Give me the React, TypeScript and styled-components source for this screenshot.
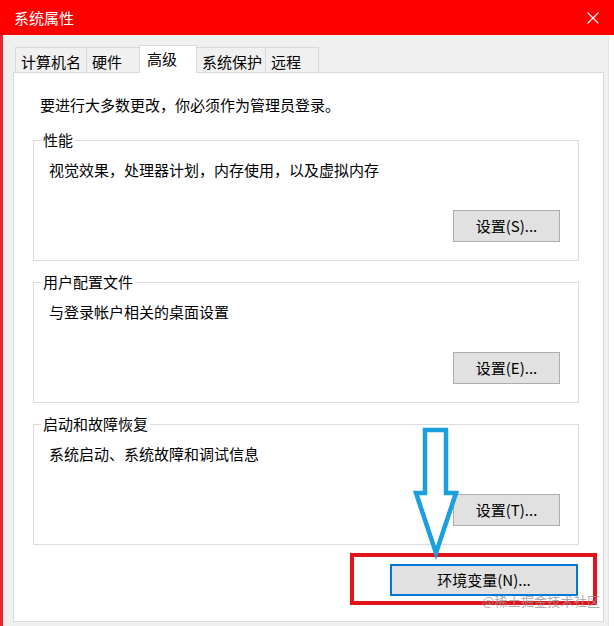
import React from "react";
import styled, { createGlobalStyle } from "styled-components";

const Global = createGlobalStyle`
  html, body { margin: 0; padding: 0; background: #ffffff; }
  body { font-family: "Noto Sans CJK SC", "Noto Sans", "Liberation Sans", sans-serif; }
  * { box-sizing: border-box; }
`;

const Window = styled.div`
  position: relative;
  width: 614px;
  height: 626px;
  display: flex;
  flex-direction: column;
  background: #ffffff;
  overflow: hidden;
  font-size: 15px;
  line-height: 20px;
  color: #000;
`;

const TitleBar = styled.div`
  height: 35px;
  flex: none;
  background: #ff0000;
  color: #ffffff;
  display: flex;
  align-items: center;
  justify-content: space-between;
  padding: 0 15px 0 14px;
  font-size: 15px;
`;

const Body = styled.div`
  flex: 1;
  width: 609px;
  background: #f0f0f0;
  border-left: 3px solid #e8262c;
  border-right: 1px solid #e4e4e4;
  padding: 10px 4px 4px 10px;
  display: flex;
  flex-direction: column;
`;

const TabStrip = styled.div`
  display: flex;
  align-items: flex-end;
  padding-left: 2px;
`;

const Tab = styled.div<{ $w: number; $active?: boolean }>`
  position: relative;
  z-index: ${(p) => (p.$active ? 2 : 1)};
  width: ${(p) => p.$w}px;
  height: ${(p) => (p.$active ? 28 : 25)}px;
  margin-right: -1px;
  margin-bottom: ${(p) => (p.$active ? -1 : 0)}px;
  padding: ${(p) => (p.$active ? 3 : 4)}px 0 0 ${(p) => (p.$active ? 7 : 5)}px;
  border: 1px solid #d9d9d9;
  border-bottom: none;
  background: ${(p) => (p.$active ? "#ffffff" : "#f0f0f0")};
  white-space: nowrap;
`;

const Panel = styled.div`
  flex: 1;
  background: #ffffff;
  border: 1px solid #d9d9d9;
  padding: 22px 24px 0 19px;
  display: flex;
  flex-direction: column;
`;

const Intro = styled.div`
  margin-left: 7px;
  margin-bottom: 15px;
`;

const Group = styled.fieldset`
  margin: 0 0 11px 0;
  padding: 10px 18px 18px 0;
  border: 1px solid #dcdcdc;
  min-width: 0;
  display: flex;
  flex-direction: column;
`;

const Legend = styled.legend`
  margin-left: 7px;
  padding: 0 2px;
  line-height: 20px;
`;

const GroupText = styled.div`
  height: 20px;
  margin-left: 15px;
`;

const Button = styled.button<{ $w: number; $focus?: boolean }>`
  align-self: flex-end;
  width: ${(p) => p.$w}px;
  height: 32px;
  margin-top: ${(p) => (p.$focus ? 0 : 30)}px;
  background: #e1e1e1;
  border: ${(p) => (p.$focus ? "2px solid #0078d7" : "1px solid #adadad")};
  font-family: inherit;
  font-size: 15px;
  line-height: 20px;
  color: #000;
  padding: 0;
`;

const EnvRow = styled.div`
  display: flex;
  justify-content: flex-end;
  margin-top: 8px;
  padding-right: 1px;
`;

const Highlight = styled.div`
  position: absolute;
  left: 350px;
  top: 553px;
  width: 247px;
  height: 52px;
  border: 4px solid #e3141c;
  pointer-events: none;
`;

const ArrowSvg = styled.svg`
  position: absolute;
  left: 0;
  top: 0;
  pointer-events: none;
`;

const Watermark = styled.div`
  position: absolute;
  left: 482px;
  top: 593px;
  font-size: 13px;
  line-height: 16px;
  color: rgba(150, 150, 150, 0.8);
  white-space: nowrap;
  letter-spacing: 0.2px;
`;

const CloseIcon = () => (
  <svg width="12" height="12" viewBox="0 0 12 12">
    <path d="M0.5 0.5 L11.5 11.5 M11.5 0.5 L0.5 11.5" stroke="#ffffff" strokeWidth="1.1" />
  </svg>
);

const tabs: { label: string; w: number; active?: boolean }[] = [
  { label: "计算机名", w: 72 },
  { label: "硬件", w: 54 },
  { label: "高级", w: 58, active: true },
  { label: "系统保护", w: 70 },
  { label: "远程", w: 54 },
];

const groups = [
  { title: "性能", text: "视觉效果，处理器计划，内存使用，以及虚拟内存", btn: "设置(S)..." },
  { title: "用户配置文件", text: "与登录帐户相关的桌面设置", btn: "设置(E)..." },
  { title: "启动和故障恢复", text: "系统启动、系统故障和调试信息", btn: "设置(T)..." },
];

export default function App() {
  return (
    <>
      <Global />
      <Window>
        <TitleBar>
          <span>系统属性</span>
          <CloseIcon />
        </TitleBar>
        <Body>
          <TabStrip>
            {tabs.map((t) => (
              <Tab key={t.label} $w={t.w} $active={t.active}>
                {t.label}
              </Tab>
            ))}
          </TabStrip>
          <Panel>
            <Intro>要进行大多数更改，你必须作为管理员登录。</Intro>
            {groups.map((g) => (
              <Group key={g.title}>
                <Legend>{g.title}</Legend>
                <GroupText>{g.text}</GroupText>
                <Button $w={107}>{g.btn}</Button>
              </Group>
            ))}
            <EnvRow>
              <Button $w={188} $focus>
                环境变量(N)...
              </Button>
            </EnvRow>
          </Panel>
        </Body>
        <Highlight />
        <ArrowSvg width="614" height="626" viewBox="0 0 614 626">
          <polygon
            points="425,430 446,430 446,493 456,493 436,553 416,493 425,493"
            fill="#ffffff"
            stroke="#1a9fdf"
            strokeWidth="4.5"
            strokeLinejoin="miter"
          />
        </ArrowSvg>
        <Watermark>@稀土掘金技术社区</Watermark>
      </Window>
    </>
  );
}
